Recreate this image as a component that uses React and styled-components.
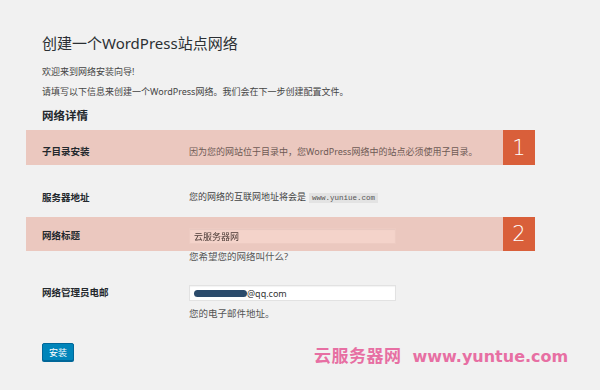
import React from 'react';
import styled, { createGlobalStyle } from 'styled-components';

const Global = createGlobalStyle`
  html, body {
    margin: 0;
    padding: 0;
    background: #f1f1f1;
  }
  body {
    font-family: "Noto Sans", "Noto Sans CJK SC", sans-serif;
    color: #444;
  }
`;

const Page = styled.div`
  position: relative;
  height: 390px;
  box-sizing: border-box;
  padding: 33px 0 0 42px;
  overflow: hidden;
`;

const Title = styled.h1`
  margin: 0;
  font-size: 15px;
  line-height: 20px;
  font-weight: 400;
  color: #2b2f33;
`;

const Text = styled.p`
  margin: ${(p) => p.$top || 0}px 0 0;
  font-size: 9px;
  line-height: 14px;
  color: #444;
`;

const Heading = styled.h2`
  margin: 9px 0 0;
  font-size: 11.5px;
  line-height: 16px;
  font-weight: 700;
  color: #23282d;
`;

const Marked = styled.div`
  display: flex;
  margin: ${(p) => p.$top}px 0 0 -16px;
`;

const Band = styled.div`
  width: 477px;
  box-sizing: border-box;
  padding: ${(p) => p.$pad};
  background: #ebc8bf;
`;

const Badge = styled.div`
  width: 32px;
  display: flex;
  align-items: center;
  justify-content: center;
  background: #d95f3a;
  color: #fff;
  font-family: "DejaVu Sans", sans-serif;
  font-size: 21px;
  font-weight: 300;
`;

const Row = styled.div`
  display: grid;
  grid-template-columns: 147px 1fr;
  align-items: center;
  margin-top: ${(p) => p.$top || 0}px;
`;

const Label = styled.div`
  font-size: 9.5px;
  line-height: 14px;
  font-weight: 700;
  color: #23282d;
`;

const Field = styled.div`
  font-size: 9px;
  line-height: 14px;
  color: ${(p) => (p.$muted ? '#6e5a55' : '#444')};
`;

const Code = styled.code`
  margin-left: 3px;
  padding: 1px 3px;
  background: #e3e3e3;
  font-family: "Liberation Mono", monospace;
  font-size: 7.5px;
  color: #555;
`;

const Input = styled.div`
  width: 207px;
  height: 16px;
  box-sizing: border-box;
  display: flex;
  align-items: center;
  padding-left: 4px;
  background: ${(p) => (p.$tinted ? '#f4d3ca' : '#fff')};
  border: 1px solid ${(p) => (p.$tinted ? '#edcbc2' : '#e2e2e2')};
  box-shadow: inset 0 1px 1px rgba(0, 0, 0, 0.05);
  font-size: 9px;
  color: #333;
`;

const Blur = styled.span`
  font-family: "Liberation Serif", "Noto Sans CJK SC", serif;
  font-size: 9px;
  color: #4a3a35;
  filter: blur(0.3px);
`;

const Redact = styled.span`
  display: inline-block;
  width: 53px;
  height: 7px;
  border-radius: 4px;
  background: #2b4b6b;
`;

const Hint = styled.div`
  margin: ${(p) => p.$top}px 0 0 147px;
  font-size: 9.5px;
  line-height: 12px;
  color: #555;
`;

const Button = styled.button`
  display: block;
  margin-top: 23px;
  width: 32px;
  height: 18px;
  padding: 0;
  border: 1px solid #006799;
  border-radius: 2px;
  background: #0085ba;
  box-shadow: 0 1px 0 #006799;
  color: #fff;
  font-family: inherit;
  font-size: 9px;
`;

const Watermark = styled.div`
  position: absolute;
  left: 314px;
  top: 342px;
  display: flex;
  align-items: baseline;
  gap: 11px;
  color: #e76fa3;
  font-weight: 700;
  white-space: nowrap;
`;

const MarkCn = styled.span`
  font-family: "Noto Sans CJK SC", sans-serif;
  font-size: 17px;
  letter-spacing: 0.5px;
`;

const MarkUrl = styled.span`
  font-family: "DejaVu Sans", sans-serif;
  font-size: 16px;
`;

export default function App() {
  return (
    <>
      <Global />
      <Page>
        <Title>创建一个WordPress站点网络</Title>
        <Text $top={12}>欢迎来到网络安装向导!</Text>
        <Text $top={6}>请填写以下信息来创建一个WordPress网络。我们会在下一步创建配置文件。</Text>
        <Heading>网络详情</Heading>

        <Marked $top={6}>
          <Band $pad="15px 0 6px 16px">
            <Row>
              <Label>子目录安装</Label>
              <Field $muted>因为您的网站位于目录中，您WordPress网络中的站点必须使用子目录。</Field>
            </Row>
          </Band>
          <Badge>1</Badge>
        </Marked>

        <Row $top={25}>
          <Label>服务器地址</Label>
          <Field>
            您的网络的互联网地址将会是<Code>www.yuniue.com</Code>
          </Field>
        </Row>

        <Marked $top={12}>
          <Band $pad="11px 0 7px 16px">
            <Row>
              <Label>网络标题</Label>
              <Input $tinted>
                <Blur>云服务器网</Blur>
              </Input>
            </Row>
          </Band>
          <Badge>2</Badge>
        </Marked>
        <Hint $top={0}>您希望您的网络叫什么?</Hint>

        <Row $top={22}>
          <Label>网络管理员电邮</Label>
          <Input>
            <Redact />
            @qq.com
          </Input>
        </Row>
        <Hint $top={7}>您的电子邮件地址。</Hint>

        <Button>安装</Button>

        <Watermark>
          <MarkCn>云服务器网</MarkCn>
          <MarkUrl>www.yuntue.com</MarkUrl>
        </Watermark>
      </Page>
    </>
  );
}
